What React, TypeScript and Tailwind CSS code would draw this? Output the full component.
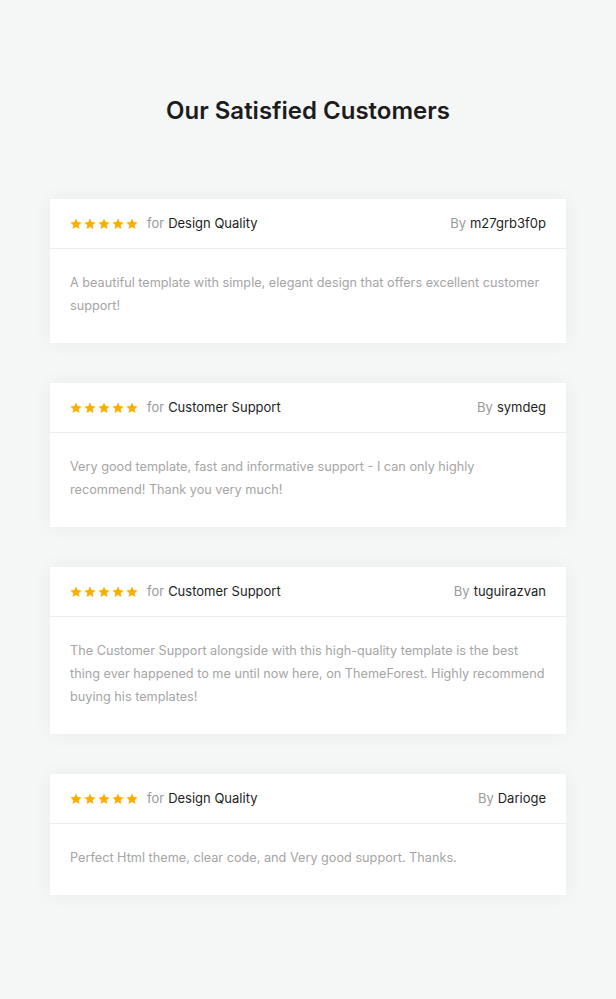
import React from "react";

interface Review {
  id: number;
  category: string;
  author: string;
  text: string;
}

const reviews: Review[] = [
  {
    id: 1,
    category: "Design Quality",
    author: "m27grb3f0p",
    text: "A beautiful template with simple, elegant design that offers excellent customer support!",
  },
  {
    id: 2,
    category: "Customer Support",
    author: "symdeg",
    text: "Very good template, fast and informative support - I can only highly recommend! Thank you very much!",
  },
  {
    id: 3,
    category: "Customer Support",
    author: "tuguirazvan",
    text: "The Customer Support alongside with this high-quality template is the best thing ever happened to me until now here, on ThemeForest. Highly recommend buying his templates!",
  },
  {
    id: 4,
    category: "Design Quality",
    author: "Darioge",
    text: "Perfect Html theme, clear code, and Very good support. Thanks.",
  },
];

const Star = () => (
  <svg className="w-[12px] h-[12px]" viewBox="0 0 24 24" fill="#ffae00">
    <path d="M12 1l3.3 7.2 7.9.8-5.9 5.3 1.7 7.8L12 18.1l-7 4 1.7-7.8L.8 9l7.9-.8z" />
  </svg>
);

const App = () => {
  return (
    <div
      className="min-h-screen bg-[#f5f6f6] pt-[93px] pb-[100px]"
      style={{ fontFamily: "Inter, 'Open Sans', sans-serif" }}
    >
      <h1 className="text-center text-[24px] font-semibold text-[#1c1c1c]">
        Our Satisfied Customers
      </h1>

      <div className="mt-[70px] mx-[50px] flex flex-col gap-[40px]">
        {reviews.map((review) => (
          <div
            key={review.id}
            className="bg-white shadow-[0_0_18px_rgba(0,0,0,0.05)]"
          >
            {/* Header */}
            <div className="h-[50px] px-5 flex items-center justify-between border-b border-[#ececec] text-[13px]">
              <div className="flex items-center">
                <div className="flex gap-[2px]">
                  {[0, 1, 2, 3, 4].map((i) => (
                    <Star key={i} />
                  ))}
                </div>
                <span className="ml-[9px] text-[#9a9a9a]">for</span>
                <span className="ml-[4px] text-[#1e1e1e]">{review.category}</span>
              </div>
              <div>
                <span className="text-[#9a9a9a]">By</span>
                <span className="ml-[4px] text-[#1e1e1e]">{review.author}</span>
              </div>
            </div>

            {/* Body */}
            <p className="px-5 pt-[22px] pb-[26px] text-[12.7px] leading-[23px] text-[#a5a5a5]">
              {review.text}
            </p>
          </div>
        ))}
      </div>
    </div>
  );
};

export default App;
